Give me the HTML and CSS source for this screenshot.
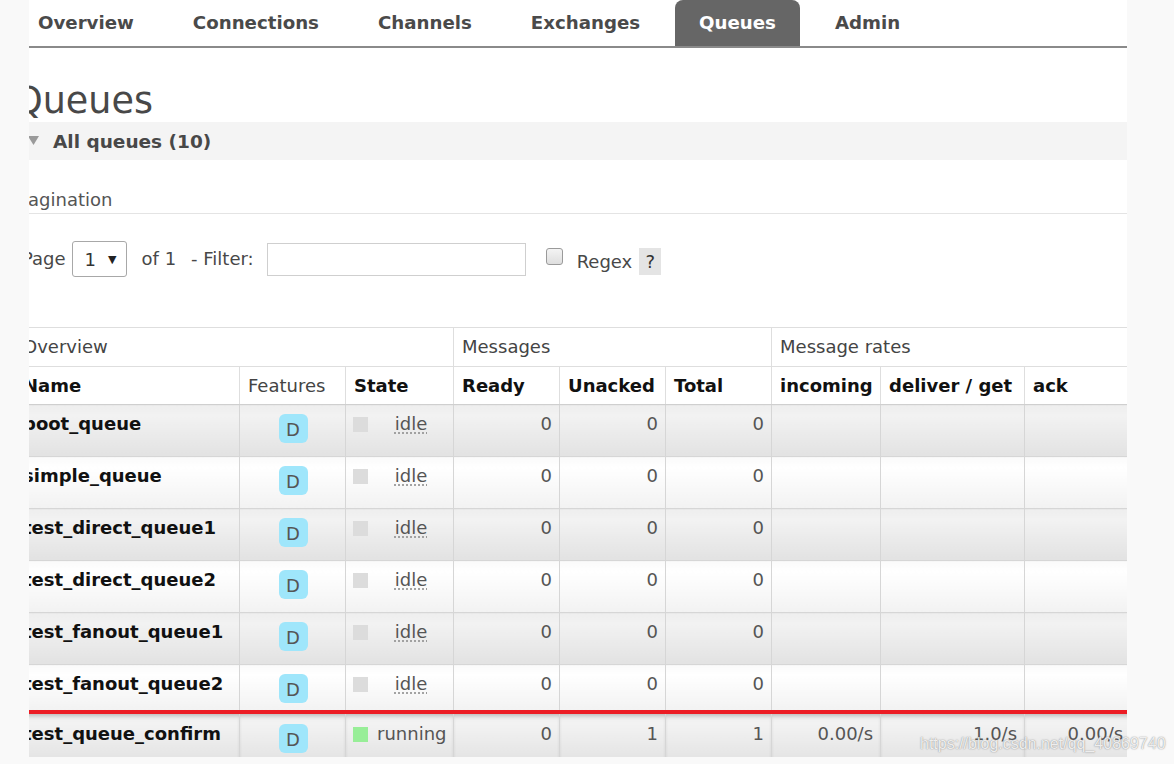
FILE: index.html
```html
<!DOCTYPE html>
<html lang="en">
<head>
<meta charset="utf-8">
<title>RabbitMQ Management - Queues</title>
<link rel="stylesheet" href="styles.css">
</head>
<body>
<div class="viewport">
  <div class="page">
    <ul class="nav">
      <li><a class="tab">Overview</a></li>
      <li><a class="tab">Connections</a></li>
      <li><a class="tab">Channels</a></li>
      <li><a class="tab">Exchanges</a></li>
      <li><a class="tab active">Queues</a></li>
      <li><a class="tab">Admin</a></li>
    </ul>

    <h1 class="title">Queues</h1>

    <div class="section">
      <h2 class="section-head"><svg class="arrow" width="11" height="9" viewBox="0 0 11 9"><polygon points="0,0 11,0 5.5,9" fill="#9a9a9a"/></svg><span>All queues (10)</span></h2>
      <div class="section-body">
        <h3 class="sub">Pagination</h3>
        <div class="filter-row">
          <span class="lbl">Page</span>
          <span class="select"><span class="sel-val">1</span><span class="sel-arrow">&#9660;</span></span>
          <span class="lbl of">of 1</span>
          <span class="lbl filter">- Filter:</span>
          <span class="input"></span>
          <span class="checkbox"></span>
          <span class="lbl regex">Regex</span>
          <span class="help">?</span>
        </div>

        <table class="list">
          <colgroup>
            <col class="c-name"><col class="c-feat"><col class="c-state">
            <col class="c-num"><col class="c-num"><col class="c-num">
            <col class="c-inc"><col class="c-del"><col class="c-ack">
          </colgroup>
          <thead>
            <tr class="group">
              <th colspan="3">Overview</th>
              <th colspan="3">Messages</th>
              <th colspan="3">Message rates</th>
            </tr>
            <tr class="cols">
              <th>Name</th>
              <th class="plain">Features</th>
              <th>State</th>
              <th>Ready</th>
              <th>Unacked</th>
              <th>Total</th>
              <th>incoming</th>
              <th>deliver / get</th>
              <th>ack</th>
            </tr>
          </thead>
          <tbody>
            <tr class="alt1">
              <td class="name">boot_queue</td>
              <td class="feat"><abbr class="badge">D</abbr></td>
              <td class="state"><div class="st"><span class="sq grey"></span><abbr class="st-text idle">idle</abbr></div></td>
              <td class="num">0</td><td class="num">0</td><td class="num">0</td>
              <td class="num"></td><td class="num"></td><td class="num"></td>
            </tr>
            <tr class="alt2">
              <td class="name">simple_queue</td>
              <td class="feat"><abbr class="badge">D</abbr></td>
              <td class="state"><div class="st"><span class="sq grey"></span><abbr class="st-text idle">idle</abbr></div></td>
              <td class="num">0</td><td class="num">0</td><td class="num">0</td>
              <td class="num"></td><td class="num"></td><td class="num"></td>
            </tr>
            <tr class="alt1">
              <td class="name">test_direct_queue1</td>
              <td class="feat"><abbr class="badge">D</abbr></td>
              <td class="state"><div class="st"><span class="sq grey"></span><abbr class="st-text idle">idle</abbr></div></td>
              <td class="num">0</td><td class="num">0</td><td class="num">0</td>
              <td class="num"></td><td class="num"></td><td class="num"></td>
            </tr>
            <tr class="alt2">
              <td class="name">test_direct_queue2</td>
              <td class="feat"><abbr class="badge">D</abbr></td>
              <td class="state"><div class="st"><span class="sq grey"></span><abbr class="st-text idle">idle</abbr></div></td>
              <td class="num">0</td><td class="num">0</td><td class="num">0</td>
              <td class="num"></td><td class="num"></td><td class="num"></td>
            </tr>
            <tr class="alt1">
              <td class="name">test_fanout_queue1</td>
              <td class="feat"><abbr class="badge">D</abbr></td>
              <td class="state"><div class="st"><span class="sq grey"></span><abbr class="st-text idle">idle</abbr></div></td>
              <td class="num">0</td><td class="num">0</td><td class="num">0</td>
              <td class="num"></td><td class="num"></td><td class="num"></td>
            </tr>
            <tr class="alt2 pre-mark">
              <td class="name">test_fanout_queue2</td>
              <td class="feat"><abbr class="badge">D</abbr></td>
              <td class="state"><div class="st"><span class="sq grey"></span><abbr class="st-text idle">idle</abbr></div></td>
              <td class="num">0</td><td class="num">0</td><td class="num">0</td>
              <td class="num"></td><td class="num"></td><td class="num"></td>
            </tr>
            <tr class="alt1 marked">
              <td class="name">test_queue_confirm</td>
              <td class="feat"><abbr class="badge">D</abbr></td>
              <td class="state"><div class="st"><span class="sq green"></span><span class="st-text">running</span></div></td>
              <td class="num">0</td><td class="num">1</td><td class="num">1</td>
              <td class="num">0.00/s</td><td class="num">1.0/s</td><td class="num">0.00/s</td>
            </tr>
          </tbody>
        </table>
      </div>
    </div>
  </div>
</div>
<div class="watermark">https://blog.csdn.net/qq_40869740</div>
</body>
</html>
```

FILE: styles.css
```css
html, body {
  margin: 0;
  padding: 0;
}

body {
  background: #f9f9f9;
  font-family: "DejaVu Sans", Verdana, sans-serif;
  font-size: 18px;
  color: #484848;
  position: relative;
  width: 1174px;
  height: 764px;
  overflow: hidden;
}

.viewport {
  margin-left: 29px;
  width: 1098px;
  height: 757px;
  background: #fff;
  overflow: hidden;
}

.page {
  margin-left: -15px;
  width: 1116px;
}

/* ---------- navigation ---------- */
.nav {
  list-style: none;
  margin: 0;
  padding: 0;
  display: flex;
  gap: 11px;
  border-bottom: 2px solid #8a8a8a;
}

.tab {
  display: block;
  padding: 0 24px;
  line-height: 46px;
  font-size: 18.2px;
  font-weight: bold;
  color: #4a4a4a;
}

.tab.active {
  background: #666;
  color: #fff;
  border-radius: 8px 8px 0 0;
}

/* ---------- title ---------- */
.title {
  margin: 32px 0 0;
  font-size: 36.5px;
  line-height: 42px;
  font-weight: normal;
  color: #484848;
}

/* ---------- section ---------- */
.section-head {
  margin: 0;
  height: 38px;
  background: #f4f4f4;
  display: flex;
  align-items: center;
  padding-left: 14px;
  font-size: 18.5px;
  font-weight: bold;
  color: #484848;
}

.arrow {
  margin-right: 14px;
  margin-top: -2px;
}

.sub {
  margin: 29px 0 0;
  padding: 0 0 2px 4px;
  font-size: 18px;
  line-height: 22px;
  font-weight: normal;
  color: #555;
  border-bottom: 1px solid #e4e4e4;
}

.filter-row {
  display: flex;
  align-items: center;
  margin-top: 27px;
  padding-left: 8px;
  height: 36px;
  color: #484848;
}

.lbl {
  line-height: 22px;
}

.select {
  display: flex;
  align-items: center;
  box-sizing: border-box;
  width: 55px;
  height: 36px;
  margin-left: 6px;
  border: 1px solid #a8a8a8;
  border-radius: 3px;
  padding-left: 12px;
  color: #333;
}

.sel-val {
  flex: 1;
}

.sel-arrow {
  font-size: 11px;
  margin-right: 9px;
  color: #222;
}

.of {
  margin-left: 15px;
}

.filter {
  margin-left: 15px;
}

.input {
  box-sizing: border-box;
  width: 259px;
  height: 33px;
  margin-left: 13px;
  border: 1px solid #cfcfcf;
  background: #fff;
}

.checkbox {
  box-sizing: border-box;
  width: 17px;
  height: 17px;
  margin-left: 20px;
  margin-top: -6px;
  border: 1px solid #9a9a9a;
  border-radius: 3px;
  background: linear-gradient(#f4f4f4, #dedede);
}

.regex {
  margin-left: 14px;
  margin-top: 5px;
}

.help {
  width: 22px;
  height: 27px;
  margin-left: 7px;
  margin-top: 5px;
  background: #e4e4e4;
  color: #333;
  display: flex;
  align-items: center;
  justify-content: center;
}

/* ---------- table ---------- */
.list {
  margin-top: 50px;
  border-collapse: collapse;
  table-layout: fixed;
  width: 1116px;
}

.c-name { width: 225px; }
.c-feat { width: 106px; }
.c-state { width: 108px; }
.c-num { width: 106px; }
.c-inc { width: 109px; }
.c-del { width: 144px; }
.c-ack { width: 106px; }

.list th {
  text-align: left;
  padding: 0 7px 0 8px;
  height: 38px;
  line-height: 22px;
  font-size: 18px;
  border: 1px solid #dedede;
  white-space: nowrap;
}

.list tr.cols th {
  height: 37px;
}

.list tr.group th {
  font-weight: normal;
  color: #444;
}

.list tr.cols th {
  font-weight: bold;
  color: #111;
  border-bottom-color: #cfcfcf;
}

.list tr.cols th.plain {
  font-weight: normal;
  color: #444;
}

.list td {
  height: 43px;
  padding: 8px 7px 0 8px;
  vertical-align: top;
  line-height: 22px;
  border: 1px solid #d6d6d6;
  border-top-color: #dcdcdc;
  white-space: nowrap;
  overflow: hidden;
}

.list tr.alt1 td {
  background: linear-gradient(#eeeeee, #f2f2f2 20%, #e2e2e2);
}

.list tr.alt2 td {
  background: linear-gradient(#fafafa, #ffffff 20%, #f2f2f2);
}

.list tr.pre-mark td {
  height: 37px;
}

.list tr.marked td {
  border-top: 4px solid #ec1c24;
  height: 40px;
  padding-top: 9px;
  box-shadow: inset 0 4px 4px -2px rgba(0, 0, 0, 0.22);
}

.name {
  font-weight: bold;
  color: #111;
}

.feat {
  text-align: center;
}

.badge {
  display: inline-block;
  width: 29px;
  height: 29px;
  margin-top: 1px;
  line-height: 31px;
  border-radius: 6px;
  background: #9fe6fb;
  color: #555;
  text-decoration: none;
}

.st {
  display: flex;
  align-items: flex-start;
}

.sq {
  width: 15px;
  height: 15px;
  margin-top: 4px;
  margin-left: -1px;
  flex: none;
}

.sq.grey { background: #dcdcdc; }
.sq.green { background: #98ee98; }

.st-text {
  flex: 1;
  margin-left: 9px;
  text-align: center;
  color: #555;
  text-decoration: none;
}

.st-text.idle {
  flex: none;
  margin: 0 auto 0 auto;
  position: relative;
  left: 4px;
  text-decoration: underline dotted #999;
  text-underline-offset: 3px;
}

.num {
  text-align: right;
  color: #555;
}

/* ---------- watermark ---------- */
.watermark {
  position: absolute;
  left: 920px;
  top: 734px;
  font-family: "Liberation Sans", Arial, sans-serif;
  font-size: 16px;
  line-height: 20px;
  color: rgba(255, 255, 255, 0.85);
  text-shadow: 0 0 1px rgba(90, 90, 90, 0.6), 0 0 2px rgba(120, 120, 120, 0.4);
  white-space: nowrap;
}
```
